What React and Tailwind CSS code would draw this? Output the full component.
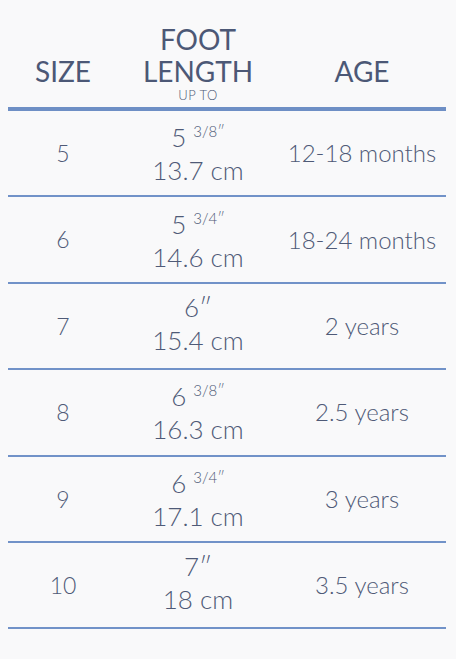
import React from "react";

const rows = [
  { size: "5", whole: "5", frac: "3/8″", cm: "13.7 cm", age: "12-18 months" },
  { size: "6", whole: "5", frac: "3/4″", cm: "14.6 cm", age: "18-24 months" },
  { size: "7", whole: "6″", frac: null, cm: "15.4 cm", age: "2 years" },
  { size: "8", whole: "6", frac: "3/8″", cm: "16.3 cm", age: "2.5 years" },
  { size: "9", whole: "6", frac: "3/4″", cm: "17.1 cm", age: "3 years" },
  { size: "10", whole: "7″", frac: null, cm: "18 cm", age: "3.5 years" },
];

export default function App() {
  const cols = "grid grid-cols-[110px_160px_168px]";

  return (
    <div
      className="min-h-screen w-full bg-[#f9f9fa] pl-[8px] text-[#4f5a77]"
      style={{ fontFamily: "Lato, 'Open Sans', sans-serif" }}
    >
      <div className="w-[438px]">
        {/* header */}
        <div className={`${cols} border-b-4 border-[#6e8fc5] pt-[23px] pb-[4px] text-[#4c5876]`}>
          <div className="flex flex-col justify-end items-center pb-[16px] text-[28px] leading-[32px]">SIZE</div>
          <div className="flex flex-col items-center">
            <div className="text-[28px] leading-[32px]">FOOT</div>
            <div className="text-[28px] leading-[32px]">LENGTH</div>
            <div className="mt-[1px] text-[13px] leading-[15px] tracking-[0.5px] font-light">UP TO</div>
          </div>
          <div className="flex flex-col justify-end items-center pb-[16px] text-[28px] leading-[32px]">AGE</div>
        </div>

        {/* rows */}
        {rows.map((r) => (
          <div key={r.size} className={`${cols} h-[86.4px] border-b-2 border-[#7192c8] items-center font-light`}>
            <div className="text-center text-[23px]">{r.size}</div>
            <div className="flex flex-col items-center pb-[4px] text-[26px] leading-[33px]">
              <div>
                {r.whole}
                {r.frac && (
                  <>
                    {" "}
                    <span className="text-[15px] align-[10px]">{r.frac}</span>
                  </>
                )}
              </div>
              <div>{r.cm}</div>
            </div>
            <div className="text-center text-[24px]">{r.age}</div>
          </div>
        ))}
      </div>
    </div>
  );
}
